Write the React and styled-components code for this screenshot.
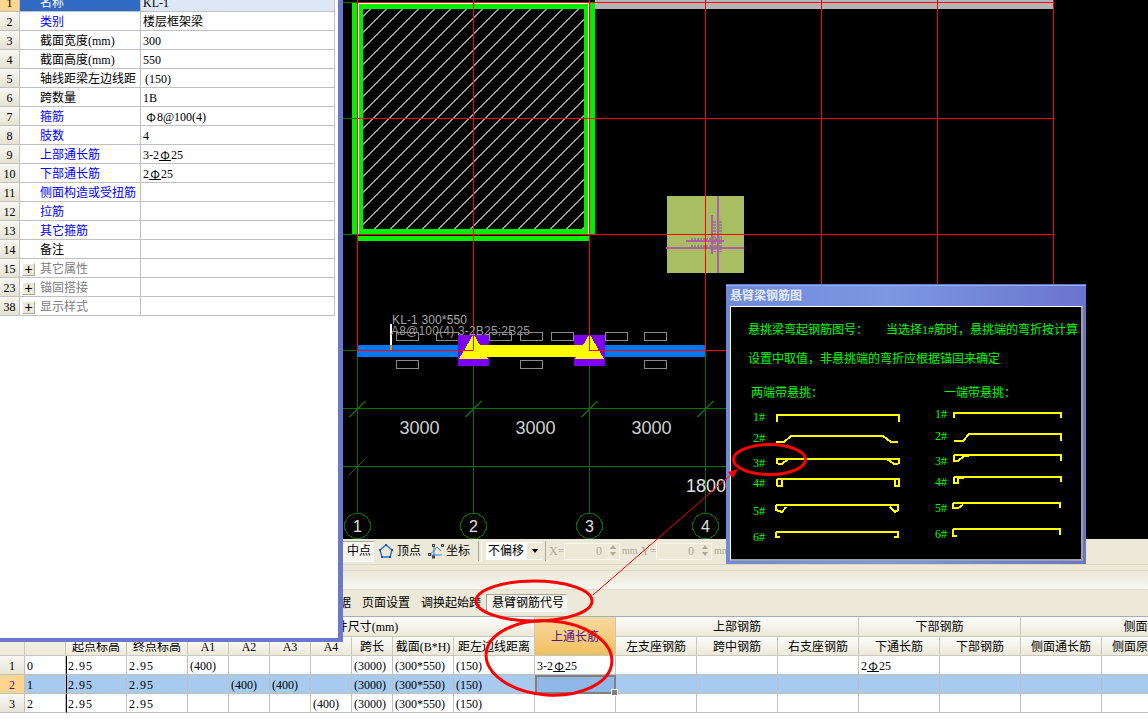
import React from 'react';
import styled, { createGlobalStyle } from 'styled-components';

const UI_FONT = '"Liberation Serif", "Noto Sans CJK SC", serif';
const CAD_FONT = '"Liberation Sans", "Noto Sans CJK SC", sans-serif';

const GlobalStyle = createGlobalStyle`
  html, body {
    margin: 0;
    padding: 0;
    background: #fff;
  }
  body {
    font-family: ${UI_FONT};
    font-size: 12px;
    line-height: 14px;
    color: #000;
  }
`;

// ---- data ----

const PROPS = [
  { no: '1', name: '名称', value: 'KL-1', selected: true },
  { no: '2', name: '类别', value: '楼层框架梁', link: true },
  { no: '3', name: '截面宽度(mm)', value: '300' },
  { no: '4', name: '截面高度(mm)', value: '550' },
  { no: '5', name: '轴线距梁左边线距', value: '(150)', shift: true },
  { no: '6', name: '跨数量', value: '1B' },
  { no: '7', name: '箍筋', value: <><Rebar>Φ</Rebar>8@100(4)</>, link: true, shift: true },
  { no: '8', name: '肢数', value: '4', link: true },
  { no: '9', name: '上部通长筋', value: <>3-2<Rebar $ribbed>Φ</Rebar>25</>, link: true },
  { no: '10', name: '下部通长筋', value: <>2<Rebar $ribbed>Φ</Rebar>25</>, link: true },
  { no: '11', name: '侧面构造或受扭筋', link: true },
  { no: '12', name: '拉筋', link: true },
  { no: '13', name: '其它箍筋', link: true },
  { no: '14', name: '备注' },
  { no: '15', name: '其它属性', group: true },
  { no: '23', name: '锚固搭接', group: true },
  { no: '38', name: '显示样式', group: true },
];

const COLUMNS = [25, 41, 61, 61, 41, 41, 41, 41, 41, 61, 81, 81, 81, 81, 81, 81, 81, 81, 81, 92];

const SUB_HEADS = ['起点标高', '终点标高', 'A1', 'A2', 'A3', 'A4', '跨长', '截面(B*H)', '距左边线距离'];
const SUB_HEADS_RIGHT = ['左支座钢筋', '跨中钢筋', '右支座钢筋', '下通长筋', '下部钢筋', '侧面通长筋', '侧面原位筋', ''];

const top = <>3-2<Rebar $ribbed>Φ</Rebar>25</>;
const bottom = <>2<Rebar $ribbed>Φ</Rebar>25</>;

const ROWS = [
  ['1', '0', '2.95', '2.95', '(400)', '', '', '', '(3000)', '(300*550)', '(150)', top, '', '', '', bottom, '', '', '', ''],
  ['2', '1', '2.95', '2.95', '', '(400)', '(400)', '', '(3000)', '(300*550)', '(150)', '', '', '', '', '', '', '', '', ''],
  ['3', '2', '2.95', '2.95', '', '', '', '(400)', '(3000)', '(300*550)', '(150)', '', '', '', '', '', '', '', '', ''],
];

const AXES = [357.5, 473.5, 589.5, 705.5, 821.5, 937.5, 1053.5];
const HATCH = Array.from({ length: 28 }, (_, i) => 379.7 + i * 16);
const SMALL_BARS_TOP = [396, 436, 489, 520, 551, 605, 644];
const SMALL_BARS_BOTTOM = [396, 520, 644];

const LEFT_FIGURES = [
  { no: '1#', cy: 417, gap: 0, d: 'M777 422V415H899V422' },
  { no: '2#', cy: 438, gap: 1, d: 'M776 442H784L791 436H883L891 442H898' },
  { no: '3#', cy: 463, gap: 5, d: 'M793 459H777V463L779 464H782L788 459M887 459H899V463L897 464H894L887 459M787 459H899' },
  { no: '4#', cy: 483, gap: 0, d: 'M777 479V485L778 486H782V480M777 479H899V486H895V480' },
  { no: '5#', cy: 511, gap: 8, d: 'M776 505V510L782 512L786 507M776 505H898V510L895 512L890 507' },
  { no: '6#', cy: 537, gap: 6, d: 'M776 532V537H780M776 532H898V537H894' },
];

const RIGHT_FIGURES = [
  { no: '1#', cy: 414, gap: 0, d: 'M954 418V413H1061V418' },
  { no: '2#', cy: 436, gap: 2, d: 'M954 441H963L969 434H1061V441' },
  { no: '3#', cy: 461, gap: 5, d: 'M954 455V461H958L964 456M954 455H1061V461M964 456H969' },
  { no: '4#', cy: 482, gap: 1, d: 'M954 477V483H958V478M954 477H1061V482M958 478H964' },
  { no: '5#', cy: 508, gap: 6, d: 'M953 503V508H958L963 505M953 503H1060V508' },
  { no: '6#', cy: 534, gap: 6, d: 'M953 529V536H957M953 529H1060V535' },
];

// polygon that stands in for the axis bubble
const bubble = (cx, cy, r) =>
  Array.from({ length: 12 }, (_, i) => {
    const a = (Math.PI * 2 * (i + 0.5)) / 12;
    return `${(cx + r * Math.cos(a)).toFixed(1)},${(cy + r * Math.sin(a)).toFixed(1)}`;
  }).join(' ');

// ---- drawings ----

const CadDrawing = () => (
  <CadSvg viewBox="0 0 1148 539" shapeRendering="crispEdges">
    <defs>
      <clipPath id="hatchClip">
        <rect x="363" y="9" width="221" height="220" />
      </clipPath>
    </defs>

    <rect x="595" y="0" width="458" height="9" fill="#b4b4b4" />

    {/* column 1 */}
    <rect x="352" y="3" width="5" height="231" fill="#00ee00" />
    <rect x="590" y="3" width="5" height="231" fill="#00ee00" />
    <rect x="358" y="236" width="231" height="5" fill="#00ee00" />
    <rect x="358.5" y="3.5" width="230" height="231" fill="none" stroke="#fff" />
    <rect x="359" y="4" width="229" height="230" fill="#00ee00" />
    <rect x="363" y="9" width="221" height="220" fill="#000" />
    <g clipPath="url(#hatchClip)" stroke="#a0a0a0">
      {HATCH.map((c) => (
        <line key={c} x1={c - 229} y1="229" x2={c - 9} y2="9" />
      ))}
    </g>

    {/* column 2 */}
    <rect x="667" y="196" width="77" height="77" fill="#a9bd62" />
    <g stroke="#8b8b78" strokeWidth="3" strokeDasharray="2 1">
      <line x1="691" y1="239.5" x2="722" y2="239.5" />
      <line x1="691" y1="246.5" x2="722" y2="246.5" />
      <line x1="714.5" y1="221" x2="714.5" y2="252" />
      <line x1="720.5" y1="221" x2="720.5" y2="252" />
    </g>
    <g fill="#b25cab">
      <rect x="717" y="196" width="2" height="77" />
      <rect x="711" y="215" width="2" height="39" />
      <rect x="686" y="240" width="38" height="2" />
      <rect x="666" y="247" width="78" height="2" />
    </g>

    {/* grid */}
    <g stroke="#007000">
      {AXES.slice(0, 4).map((x) => (
        <line key={x} x1={x} y1="350" x2={x} y2="539" />
      ))}
      <line x1="343" y1="408.5" x2="1000" y2="408.5" />
      <line x1="343" y1="466.5" x2="1000" y2="466.5" />
      <line x1="343" y1="2.5" x2="357" y2="2.5" />
      <line x1="343" y1="118.5" x2="357" y2="118.5" />
      <line x1="343" y1="234.5" x2="357" y2="234.5" />
      <line x1="343" y1="350.5" x2="357" y2="350.5" />
      {AXES.slice(0, 4).map((x) => (
        <line key={x} x1={x - 8} y1="417" x2={x + 8} y2="401" />
      ))}
      <line x1="349" y1="475" x2="365" y2="459" />
    </g>

    {/* beam */}
    <g fill="none" stroke="#8a8a8a">
      {SMALL_BARS_TOP.map((x) => (
        <rect key={x} x={x + 0.5} y="332.5" width="22" height="8" />
      ))}
      {SMALL_BARS_BOTTOM.map((x) => (
        <rect key={x} x={x + 0.5} y="360.5" width="22" height="8" />
      ))}
    </g>
    <rect x="357" y="345" width="101" height="12" fill="#0078f0" />
    <rect x="605" y="345" width="100" height="12" fill="#0078f0" />
    <rect x="458" y="335" width="31" height="31" fill="#7d00f5" />
    <rect x="574" y="335" width="31" height="31" fill="#7d00f5" />
    <rect x="473" y="345" width="116" height="12" fill="#ffff00" />
    <polygon points="473.5,334 459,359 488,359" fill="#ffff00" />
    <polygon points="589.5,334 575,359 604,359" fill="#ffff00" />
    <rect x="390" y="324" width="2" height="21" fill="#fff" />
    <rect x="390" y="345" width="2" height="5" fill="#ff8000" />

    {/* red lines above the beam */}
    <g stroke="#ff0000">
      {AXES.map((x) => (
        <line key={x} x1={x} y1="0" x2={x} y2="350" />
      ))}
      <line x1="357" y1="2.5" x2="1054" y2="2.5" />
      <line x1="357" y1="118.5" x2="1054" y2="118.5" />
      <line x1="357" y1="234.5" x2="1054" y2="234.5" />
      <line x1="357" y1="350.5" x2="473" y2="350.5" />
      <line x1="589" y1="350.5" x2="1054" y2="350.5" />
    </g>

    <CadText x="392" y="324" $size={12} fill="#a8a8a8" textLength="75">KL-1 300*550</CadText>
    <CadText x="391" y="335" $size={12} fill="#9a9a9a" textLength="139">A8@100(4) 3-2B25;2B25</CadText>
    <CadText x="419.5" y="434" $size={18} fill="#d0d0d0" textAnchor="middle">3000</CadText>
    <CadText x="535.5" y="434" $size={18} fill="#d0d0d0" textAnchor="middle">3000</CadText>
    <CadText x="651.5" y="434" $size={18} fill="#d0d0d0" textAnchor="middle">3000</CadText>
    <CadText x="686" y="492" $size={18} fill="#e0e0e0">1800</CadText>

    {AXES.slice(0, 4).map((x, i) => (
      <g key={x}>
        <polygon points={bubble(x, 526, 13)} fill="#000" stroke="#007000" />
        <CadText x={x} y="532" $size={16} fill="#e0e0e0" textAnchor="middle">{i + 1}</CadText>
      </g>
    ))}
  </CadSvg>
);

const Annotations = () => (
  <AnnotationSvg viewBox="0 0 1148 722">
    <g fill="none" stroke="#ff0000">
      <ellipse cx="769.5" cy="459.5" rx="36" ry="15" strokeWidth="3" />
      <ellipse cx="534" cy="601" rx="58" ry="20" strokeWidth="3" />
      <ellipse cx="549" cy="658" rx="63" ry="37" strokeWidth="3" transform="rotate(4 549 658)" />
      <line x1="593" y1="595" x2="733" y2="473" />
    </g>
    <polygon points="738,469 728,472 733,478" fill="#ff0000" />
  </AnnotationSvg>
);

const PentagonIcon = () => (
  <svg width="16" height="16" viewBox="0 0 16 16">
    <polygon points="8,2 14,7 12,14 4,14 2,7" fill="none" stroke="#2f6fc4" strokeWidth="1.4" />
    <g fill="#1f4fa8">
      <rect x="7" y="1" width="2" height="2" />
      <rect x="13" y="6" width="2" height="2" />
      <rect x="11" y="13" width="2" height="2" />
      <rect x="3" y="13" width="2" height="2" />
      <rect x="1" y="6" width="2" height="2" />
    </g>
  </svg>
);

const CoordIcon = () => (
  <svg width="18" height="16" viewBox="0 0 18 16">
    <path d="M2 12H15M7 15V4M3 12L10 4L14 8" fill="none" stroke="#3f7fd0" />
    <g fill="none" stroke="#444">
      <rect x="1.5" y="10.5" width="2" height="2" />
      <rect x="5.5" y="1.5" width="2" height="2" />
      <rect x="14.5" y="1.5" width="2" height="2" />
      <rect x="5.5" y="13" width="2" height="2" />
    </g>
  </svg>
);

const Figure = ({ item, x0, labelIndent, labelWidth }) => (
  <FigureRow $gap={item.gap}>
    <FigureLabel $indent={labelIndent} $width={labelWidth}>{item.no}</FigureLabel>
    <FigureSvg viewBox={`${x0} ${item.cy - 10} 128 20`} shapeRendering="crispEdges">
      <path d={item.d} fill="none" stroke="#ffff00" strokeWidth="2" />
    </FigureSvg>
  </FigureRow>
);

const SpinField = ({ label }) => (
  <>
    <FieldLabel>{label}</FieldLabel>
    <FieldInput>
      0
      <Spinner>
        <SpinUp />
        <SpinDown />
      </Spinner>
    </FieldInput>
    <FieldUnit>mm</FieldUnit>
  </>
);

// ---- page ----

export default function App() {
  return (
    <Page>
      <GlobalStyle />

      <CadView>
        <CadDrawing />
      </CadView>

      <SnapBar>
        <SnapActive>中点</SnapActive>
        <SnapItem><PentagonIcon />顶点</SnapItem>
        <SnapItem $icon><CoordIcon />坐标</SnapItem>
        <Grip />
        <Combo>
          不偏移
          <ComboArrow />
        </Combo>
        <Divider />
        <SpinField label="X=" />
        <SpinField label="Y=" />
      </SnapBar>

      <EmptyStrip />
      <SoftBand />

      <TabBar>
        <Tab>数据</Tab>
        <Tab>页面设置</Tab>
        <Tab>调换起始跨</Tab>
        <ActiveTab>悬臂钢筋代号</ActiveTab>
      </TabBar>

      <GridWrap>
        <SpanGrid $columns={COLUMNS}>
          <HeadCell $col="1" $row="1 / span 2" />
          <HeadCell $col="2" $row="1 / span 2" />
          <HeadCell $col="3 / span 2" $row="1" />
          <HeadCell $col="5 / span 7" $row="1">构件尺寸(mm)</HeadCell>
          <OrangeHead $col="12" $row="1 / span 2">上通长筋</OrangeHead>
          <HeadCell $col="13 / span 3" $row="1">上部钢筋</HeadCell>
          <HeadCell $col="16 / span 2" $row="1">下部钢筋</HeadCell>
          <HeadCell $col="18 / span 3" $row="1">侧面钢筋</HeadCell>

          {SUB_HEADS.map((label, i) => (
            <HeadCell key={label} $col={i + 3} $row="2">{label}</HeadCell>
          ))}
          {SUB_HEADS_RIGHT.map((label, i) => (
            <HeadCell key={i} $col={i + 13} $row="2">{label}</HeadCell>
          ))}

          {ROWS.map((row, r) =>
            row.map((text, c) => {
              const selected = r === 1;
              if (c === 0) {
                return <RowNo key={c} $selected={selected}>{text}</RowNo>;
              }
              if (selected && c === 11) {
                return (
                  <ActiveCell key={c}>
                    <Handle />
                  </ActiveCell>
                );
              }
              return (
                <Cell key={c} $selected={selected} $divider={c === 2} $wide={c === 2 || c === 3}>
                  {text}
                </Cell>
              );
            })
          )}
        </SpanGrid>
      </GridWrap>

      {/* floating property window */}
      <PropWindow>
        <PropTable>
          {PROPS.map((p) => (
            <React.Fragment key={p.no}>
              <PropNo $selected={p.selected}>{p.no}</PropNo>
              <PropName $selected={p.selected} $link={p.link} $group={p.group}>
                {p.group && <Expander>+</Expander>}
                {p.name}
              </PropName>
              <PropValue $selected={p.selected} $shift={p.shift}>{p.value}</PropValue>
            </React.Fragment>
          ))}
        </PropTable>
      </PropWindow>

      {/* floating rebar dialog */}
      <Dialog>
        <DialogTitle>悬臂梁钢筋图</DialogTitle>
        <DialogBody>
          <NoteLine>
            <span>悬挑梁弯起钢筋图号：</span>
            <span>当选择1#筋时，悬挑端的弯折按计算</span>
          </NoteLine>
          <NoteLine $top={15}>设置中取值，非悬挑端的弯折应根据锚固来确定</NoteLine>
          <FigureColumns>
            <FigureColumn $width={187}>
              <FigureHead $indent={3} $below={7}>两端带悬挑：</FigureHead>
              {LEFT_FIGURES.map((f) => (
                <Figure key={f.no} item={f} x0={774} labelIndent={5} labelWidth={21} />
              ))}
            </FigureColumn>
            <FigureColumn $width={150}>
              <FigureHead $indent={9} $below={4}>一端带悬挑：</FigureHead>
              {RIGHT_FIGURES.map((f) => (
                <Figure key={f.no} item={f} x0={951} labelIndent={0} labelWidth={16} />
              ))}
            </FigureColumn>
          </FigureColumns>
        </DialogBody>
      </Dialog>

      <Annotations />
    </Page>
  );
}

// ---- styles ----

function Rebar(props) {
  return <RebarGlyph {...props} />;
}

const Page = styled.div`
  position: relative;
  width: 1148px;
  height: 722px;
  overflow: hidden;
  display: flex;
  flex-direction: column;
  background: #fff;
`;

const CadView = styled.div`
  height: 539px;
  flex: none;
  background: #000;
`;

const CadSvg = styled.svg`
  display: block;
  width: 1148px;
  height: 539px;
`;

const CadText = styled.text`
  font-family: ${CAD_FONT};
  font-size: ${(p) => p.$size}px;
`;

const AnnotationSvg = styled.svg`
  position: absolute;
  left: 0;
  top: 0;
  width: 1148px;
  height: 722px;
  pointer-events: none;
`;

const SnapBar = styled.div`
  flex: none;
  box-sizing: border-box;
  height: 26px;
  padding: 2px 0 3px 343px;
  display: flex;
  align-items: center;
  background: #ece9d8;
  border-bottom: 1px solid #dcd8c2;
`;

const SnapItem = styled.div`
  display: flex;
  align-items: center;
  gap: ${(p) => (p.$icon ? 1 : 3)}px;
  margin-left: 4px;
  padding-right: 2px;
`;

const SnapActive = styled.div`
  box-sizing: border-box;
  width: 31px;
  height: 21px;
  padding-left: 4px;
  display: flex;
  align-items: center;
  background: #f6f5ee;
  border-top: 1px solid #aca899;
  border-bottom: 1px solid #fff;
`;

const Grip = styled.div`
  width: 2px;
  height: 20px;
  margin: 0 4px 0 6px;
  border-left: 1px solid #aca899;
  border-right: 1px solid #fff;
`;

const Combo = styled.div`
  box-sizing: border-box;
  width: 56px;
  height: 18px;
  padding-left: 2px;
  display: flex;
  align-items: center;
  justify-content: space-between;
  background: #fff;
`;

const ComboArrow = styled.div`
  width: 15px;
  height: 16px;
  display: flex;
  align-items: center;
  justify-content: center;
  background: #ece9d8;

  &::after {
    content: '';
    border-left: 3px solid transparent;
    border-right: 3px solid transparent;
    border-top: 4px solid #000;
  }
`;

const Divider = styled.div`
  width: 1px;
  height: 20px;
  margin: 0 3px 0 3px;
  background: #aca899;
`;

const FieldLabel = styled.span`
  width: 15px;
  color: #aca899;
`;

const FieldInput = styled.div`
  box-sizing: border-box;
  width: 56px;
  height: 17px;
  padding-right: 17px;
  position: relative;
  display: flex;
  align-items: center;
  justify-content: flex-end;
  color: #aca899;
  border: 1px solid #f8f7ee;
`;

const Spinner = styled.div`
  position: absolute;
  right: 3px;
  top: 1px;
  display: flex;
  flex-direction: column;
  gap: 3px;
`;

const SpinUp = styled.div`
  border-left: 3px solid transparent;
  border-right: 3px solid transparent;
  border-bottom: 4px solid #aca899;
`;

const SpinDown = styled.div`
  border-left: 3px solid transparent;
  border-right: 3px solid transparent;
  border-top: 4px solid #aca899;
`;

const FieldUnit = styled.span`
  width: 19px;
  margin-left: 2px;
  color: #aca899;
  font-size: 10px;
`;

const EmptyStrip = styled.div`
  height: 5px;
  flex: none;
  background: #ece9d8;
`;

const SoftBand = styled.div`
  height: 20px;
  flex: none;
  box-sizing: border-box;
  background: linear-gradient(#ece9d8, #f8f7f1);
  border-top: 1px solid #ddd9c4;
  border-bottom: 1px solid #e4dfc8;
`;

const TabBar = styled.div`
  height: 26px;
  flex: none;
  box-sizing: border-box;
  padding-left: 327px;
  display: flex;
  align-items: center;
  gap: 11px;
  background: #ece9d8;
`;

const Tab = styled.div`
  flex: none;
`;

const ActiveTab = styled(Tab)`
  box-sizing: border-box;
  width: 81px;
  height: 18px;
  margin-left: -6px;
  padding-left: 5px;
  display: flex;
  align-items: center;
  background: #f6f5ee;
  border: 1px solid;
  border-color: #aca899 #fff #fff #aca899;
`;

const GridWrap = styled.div`
  flex: none;
  overflow: hidden;
  border-top: 1px solid #a4acb4;
`;

const SpanGrid = styled.div`
  display: grid;
  width: max-content;
  grid-template-columns: ${(p) => p.$columns.map((w) => `${w}px`).join(' ')};
  grid-template-rows: 20px 19px 19px 19px 19px;
`;

const HeadCell = styled.div`
  grid-column: ${(p) => p.$col};
  grid-row: ${(p) => p.$row};
  box-sizing: border-box;
  padding-top: 1px;
  display: flex;
  align-items: center;
  justify-content: center;
  white-space: nowrap;
  overflow: hidden;
  background: linear-gradient(#fdfdfb, #ece9d8);
  border-right: 1px solid #c8c8c0;
  border-bottom: 1px solid #c8c8c0;
`;

const OrangeHead = styled(HeadCell)`
  color: #54108c;
  background: linear-gradient(#fad9a0, #f0c060);
`;

const Cell = styled.div`
  box-sizing: border-box;
  padding: 1px 0 0 ${(p) => (p.$divider ? 1 : 2)}px;
  display: flex;
  align-items: center;
  white-space: nowrap;
  letter-spacing: ${(p) => (p.$wide ? 1 : 0)}px;
  background: ${(p) => (p.$selected ? '#a6caf0' : '#fff')};
  border-right: 1px solid #c0c0c0;
  border-bottom: 1px solid #c0c0c0;
  border-left: ${(p) => (p.$divider ? '1px solid #000' : '0')};
`;

const RowNo = styled.div`
  box-sizing: border-box;
  padding-top: 1px;
  display: flex;
  align-items: center;
  justify-content: center;
  color: ${(p) => (p.$selected ? '#54108c' : '#000')};
  background: ${(p) => (p.$selected ? '#fdd58c' : 'linear-gradient(#f8f7f2, #e8e5d6)')};
  border-right: 1px solid #c0c0c0;
  border-bottom: 1px solid #c0c0c0;
`;

const ActiveCell = styled.div`
  position: relative;
  box-sizing: border-box;
  background: #8fb8e8;
  border: 2px solid #808080;
`;

const Handle = styled.div`
  position: absolute;
  right: -4px;
  bottom: -4px;
  width: 5px;
  height: 5px;
  background: #808080;
  border: 1px solid #fff;
`;

const PropWindow = styled.div`
  position: absolute;
  left: 0;
  top: 0;
  box-sizing: border-box;
  width: 343px;
  height: 642px;
  overflow: hidden;
  background: #fff;
  border-right: 5px solid #6b79cd;
  border-bottom: 4px solid #6b79cd;
`;

const PropTable = styled.div`
  display: grid;
  width: 335px;
  margin-top: -7px;
  grid-template-columns: 20px 121px 194px;
  grid-auto-rows: 19px;
`;

const PropNo = styled.div`
  box-sizing: border-box;
  padding-top: 1px;
  display: flex;
  align-items: center;
  justify-content: center;
  background: ${(p) => (p.$selected ? '#fdd58c' : 'linear-gradient(#f8f7f2, #e6e3d4)')};
  border-right: 1px solid #c0c0c0;
  border-bottom: 1px solid #c0c0c0;
`;

const nameColor = (p) => {
  if (p.$selected) return '#fff';
  if (p.$group) return '#808080';
  return p.$link ? '#0000ff' : '#000';
};

const PropName = styled.div`
  box-sizing: border-box;
  padding: 2px 0 0 ${(p) => (p.$group ? 2 : 20)}px;
  display: flex;
  align-items: center;
  white-space: nowrap;
  color: ${nameColor};
  background: ${(p) => (p.$selected ? '#316ac5' : '#fff')};
  border-right: 1px solid #c0c0c0;
  border-bottom: 1px solid #c0c0c0;
`;

const PropValue = styled.div`
  box-sizing: border-box;
  padding: 2px 0 0 ${(p) => (p.$shift ? 4 : 2)}px;
  display: flex;
  align-items: center;
  white-space: nowrap;
  background: ${(p) => (p.$selected ? '#dde7f5' : '#fff')};
  border-right: 1px solid #c0c0c0;
  border-bottom: 1px solid #c0c0c0;
`;

const Expander = styled.span`
  box-sizing: border-box;
  width: 13px;
  height: 13px;
  margin-right: 5px;
  display: flex;
  align-items: center;
  justify-content: center;
  color: #000;
  font-family: ${CAD_FONT};
  font-size: 14px;
  background: #ece9d8;
  border: 1px solid;
  border-color: #fff #aca899 #aca899 #fff;
`;

const RebarGlyph = styled.span`
  display: inline-block;
  box-sizing: border-box;
  width: 12px;
  height: 12px;
  line-height: 11px;
  text-align: center;
  font-family: "Noto Sans CJK SC", sans-serif;
  border-bottom: ${(p) => (p.$ribbed ? '1px solid #000' : '0')};
`;

const Dialog = styled.div`
  position: absolute;
  left: 726px;
  top: 284px;
  box-sizing: border-box;
  width: 360px;
  height: 280px;
  display: flex;
  flex-direction: column;
  background: linear-gradient(90deg, #6f8ad8, #7c98e2 45%, #6a74cc);
  border-top: 1px solid #5f78c8;
  box-shadow: inset 0 1px 0 #98b0ec;
`;

const DialogTitle = styled.div`
  flex: none;
  box-sizing: border-box;
  height: 21px;
  padding-left: 4px;
  display: flex;
  align-items: center;
  color: #e4ebff;
  font-weight: bold;
`;

const DialogBody = styled.div`
  flex: none;
  box-sizing: border-box;
  width: 353px;
  height: 255px;
  margin-left: 4px;
  padding: 16px 0 0 17px;
  overflow: hidden;
  color: #00ff00;
  background: #000;
  border-style: solid;
  border-width: 1px 2px 2px 1px;
  border-color: #fff #a0a0a0 #a0a0a0 #fff;
`;

const NoteLine = styled.div`
  display: flex;
  gap: 18px;
  margin-top: ${(p) => p.$top || 0}px;
  white-space: nowrap;
`;

const FigureColumns = styled.div`
  display: flex;
  margin-top: 20px;
`;

const FigureColumn = styled.div`
  flex: none;
  width: ${(p) => p.$width}px;
`;

const FigureHead = styled.div`
  padding-left: ${(p) => p.$indent}px;
  margin-bottom: ${(p) => p.$below}px;
`;

const FigureRow = styled.div`
  display: flex;
  align-items: center;
  height: 20px;
  margin-top: ${(p) => p.$gap}px;
`;

const FigureLabel = styled.div`
  flex: none;
  width: ${(p) => p.$width}px;
  margin-left: ${(p) => p.$indent}px;
`;

const FigureSvg = styled.svg`
  flex: none;
  width: 128px;
  height: 20px;
  overflow: visible;
`;
